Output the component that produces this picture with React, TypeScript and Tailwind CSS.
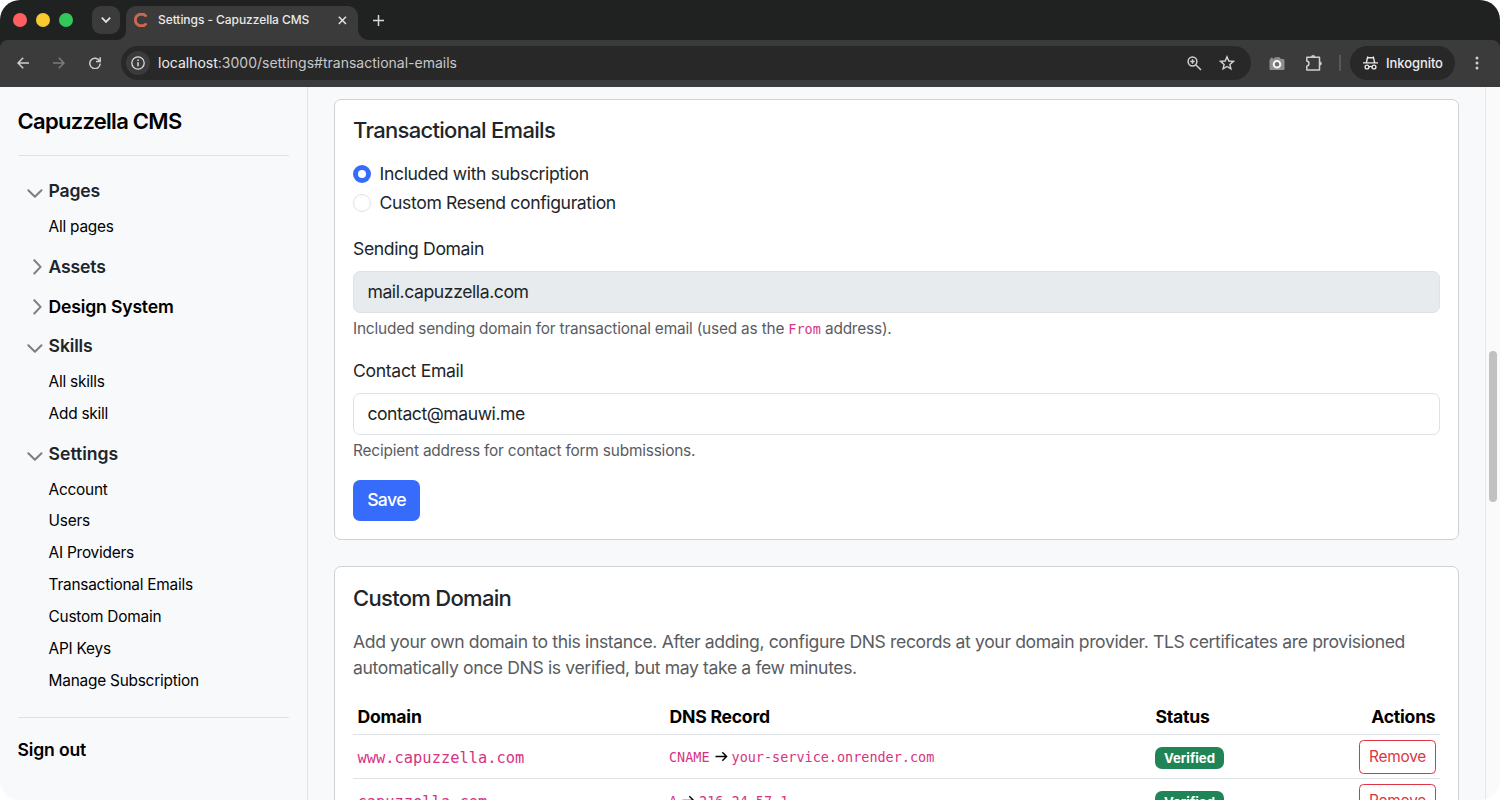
import type { ReactNode } from "react"
import clsx from "clsx"

type NavSection = {
  label: string
  open?: boolean
  strong?: boolean
  className: string
  items?: string[]
}

const sections: NavSection[] = [
  {
    label: "Pages",
    open: true,
    className: "mt-[22px] tracking-[-0.012em]",
    items: ["All pages"],
  },
  { label: "Assets", className: "mt-[11.1px] tracking-[-0.01em]" },
  { label: "Design System", strong: true, className: "mt-[14px] tracking-[-0.011em]" },
  {
    label: "Skills",
    open: true,
    className: "mt-[13px] tracking-[-0.01em]",
    items: ["All skills", "Add skill"],
  },
  {
    label: "Settings",
    open: true,
    className: "mt-[11.1px] tracking-[-0.002em]",
    items: [
      "Account",
      "Users",
      "AI Providers",
      "Transactional Emails",
      "Custom Domain",
      "API Keys",
      "Manage Subscription",
    ],
  },
]

const domains = [
  { name: "www.capuzzella.com", type: "CNAME", target: "your-service.onrender.com" },
  { name: "capuzzella.com", type: "A", target: "216.24.57.1" },
]

function TabStrip() {
  return (
    <div className="flex h-10 items-end bg-[#202221]">
      <div className="mb-[13px] ml-[13px] flex gap-[9px]">
        <span className="size-[14px] rounded-full bg-[#ff5f5f]" />
        <span className="size-[14px] rounded-full bg-[#fac831]" />
        <span className="size-[14px] rounded-full bg-[#32c85a]" />
      </div>
      <button className="mb-[6px] ml-[19px] flex size-7 items-center justify-center rounded-[9px] bg-[#3b3b3b]">
        <svg width="12" height="8" viewBox="0 0 12 8" fill="none" stroke="#e3e3e3" strokeWidth="1.8">
          <path d="M1.8 1.7 6 5.9l4.2-4.2" />
        </svg>
      </button>
      <div className="relative ml-[6px] flex h-[34px] w-[232px] items-center rounded-t-[10px] bg-[#3b3b3b] pb-[6px] pl-[7px]">
        <svg className="absolute bottom-0 -left-[9px]" width="9" height="9" fill="#3b3b3b">
          <path d="M9 0v9H0a9 9 0 0 0 9-9Z" />
        </svg>
        <svg className="absolute -right-[11px] bottom-0" width="11" height="11" fill="#3b3b3b">
          <path d="M0 0v11h11A11 11 0 0 1 0 0Z" />
        </svg>
        <svg width="16" height="16" viewBox="0 0 16 16" fill="none" stroke="#cd6853" strokeWidth="2.8">
          <path d="M12.6 4.7V3.9L10.8 2.3H6.2L3.4 4.4 2.5 6.6v2.8l.9 2.2 2.8 2.1h4.6l1.8-1.6v-.8" />
        </svg>
        <span className="ml-[9px] text-[12px] leading-4 font-medium tracking-[-0.005em] whitespace-nowrap text-[#e8e8e8]">
          Settings - Capuzzella CMS
        </span>
        <svg
          className="absolute top-[10px] left-[212px]"
          width="9"
          height="9"
          stroke="#e3e3e3"
          strokeWidth="1.5"
        >
          <path d="m.8.8 7.200 7.200m0-7.200L.8 8" />
        </svg>
      </div>
      <svg className="mb-[14.5px] ml-[14.5px]" width="11" height="11" stroke="#d8d8d8" strokeWidth="1.5">
        <path d="M5.5 0v11M0 5.5h11" />
      </svg>
    </div>
  )
}

function Toolbar() {
  return (
    <div className="bg-[#202221]">
      <div className="flex h-[47px] items-center rounded-t-[8px] bg-[#3b3b3b] pb-px">
        <svg className="ml-[17px]" width="12" height="12" fill="none" stroke="#cfcfcf" strokeWidth="1.5">
          <path d="M12 6H1M6.2.8 1 6l5.2 5.2" />
        </svg>
        <svg className="ml-6" width="12" height="12" fill="none" stroke="#7c7c7c" strokeWidth="1.5">
          <path d="M0 6h11M5.8.8 11 6l-5.2 5.2" />
        </svg>
        <svg className="ml-6" width="12" height="12" fill="none" stroke="#cfcfcf" strokeWidth="1.5">
          <path d="M10.6 4A5.2 5.2 0 1 0 11.2 6.600M11.2.2v4.200H7" />
        </svg>
        <div className="ml-5 flex h-[34px] w-[1130px] items-center rounded-full bg-[#282828] pl-[5px]">
          <span className="flex size-6 items-center justify-center rounded-full bg-[#3b3b3b]">
            <svg width="14" height="14" fill="none" stroke="#dcdcdc" strokeWidth="1.3">
              <circle cx="7" cy="7" r="6.2" />
              <path d="M7 6.2v4.1M7 3.4v1.5" strokeWidth="1.5" />
            </svg>
          </span>
          <span className="ml-2 text-[14px] leading-5 whitespace-nowrap text-[#c7c7c7]">
            <span className="text-[#ececec]">localhost</span>:3000/settings#transactional-emails
          </span>
          <svg
            className="mr-[17px] ml-auto"
            width="15"
            height="15"
            fill="none"
            stroke="#cfcfcf"
            strokeWidth="1.5"
          >
            <circle cx="5.500" cy="5.500" r="4.400" />
            <path d="m8.700 8.700 5.300 5.300M5.500 3.300v4.400M3.300 5.500h4.400" />
          </svg>
          <svg
            className="mr-[16px]"
            width="16"
            height="16"
            viewBox="0 0 16 16"
            fill="none"
            stroke="#d4d4d4"
            strokeWidth="1.4"
          >
            <path d="m8 1.800 1.800 4.200 4.600.400-3.500 3 1 4.500L8 11.500l-3.900 2.400 1-4.500-3.500-3L6.200 6Z" />
          </svg>
        </div>
        <svg className="ml-[18px]" width="16" height="15" viewBox="0 0 16 15">
          <path
            d="M1.500 3.200V1.800h2.300v1h1L6 1.200h4.500L12 2.900h2.200c.7 0 1.300.6 1.300 1.300v8.500c0 .7-.6 1.300-1.300 1.300H1.800C1.100 14 .5 13.400.500 12.700V4.200c0-.5.400-.9 1-1Z"
            fill="#8e8e8e"
          />
          <circle cx="8" cy="8.200" r="3.300" fill="#6e6e6e" stroke="#f4f4f4" strokeWidth="2" />
        </svg>
        <svg
          className="ml-5"
          width="18"
          height="18"
          viewBox="0 0 18 18"
          fill="none"
          stroke="#cfcfcf"
          strokeWidth="1.500"
        >
          <path d="M1.800 3.200h12.700v12.700H1.800v-3.700a2.700 2.700 0 0 0 0-5.300Z" strokeLinejoin="round" />
          <path
            d="M6.300 3a1.800 1.800 0 0 1 3.600 0ZM14.700 7.700a1.800 1.800 0 0 1 0 3.600Z"
            fill="#cfcfcf"
            strokeWidth=".6"
          />
        </svg>
        <span className="ml-4 h-4 w-[2px] bg-[#585858]" />
        <div className="ml-[9px] flex h-[34px] w-[105px] items-center rounded-full bg-[#282828] pl-[13px]">
          <svg width="15" height="14" viewBox="0 0 15 14" fill="none" stroke="#e6e6e6" strokeWidth="1.400">
            <path d="M0 6.900h15M3.400 6.500 4.600 1.200l1.600.600h2.600l1.600-.600 1.200 5.300" />
            <circle cx="4" cy="11" r="1.900" />
            <circle cx="11" cy="11" r="1.900" />
            <path d="M5.900 10.800q1.600-.9 3.200 0" />
          </svg>
          <span className="ml-2 text-[13px] leading-5 font-medium tracking-[-0.005em] text-[#ececec]">
            Inkognito
          </span>
        </div>
        <svg className="ml-5" width="4" height="14" fill="#cfcfcf">
          <circle cx="2" cy="2" r="1.500" />
          <circle cx="2" cy="7" r="1.500" />
          <circle cx="2" cy="12" r="1.500" />
        </svg>
      </div>
    </div>
  )
}

function Chevron({ open }: { open?: boolean }) {
  return (
    <span className="flex h-[26px] w-[31px] shrink-0 items-center">
      {open ? (
        <svg
          className="mt-[5px] ml-[9px]"
          width="16"
          height="9"
          fill="none"
          stroke="#7d7e80"
          strokeWidth="2"
          strokeLinecap="round"
          strokeLinejoin="round"
        >
          <path d="m1.300 1.200 6.600 6.500 6.600-6.500" />
        </svg>
      ) : (
        <svg
          className="ml-[15px]"
          width="9"
          height="16"
          fill="none"
          stroke="#7d7e80"
          strokeWidth="2"
          strokeLinecap="round"
          strokeLinejoin="round"
        >
          <path d="m1.300 1.300 6.300 6.600-6.300 6.600" />
        </svg>
      )}
    </span>
  )
}

function Sidebar() {
  return (
    <aside className="w-[308px] shrink-0 border-r border-[#dee2e6] pt-[21px] pr-[18px] pl-[17.6px]">
      <h1 className="text-[22px] leading-[26px] font-semibold tracking-[-0.033em] text-black">
        Capuzzella CMS
      </h1>
      <nav className="mt-[21px] border-t border-b border-[#dee2e6] pb-[20px]">
        {sections.map((section) => (
          <div key={section.label} className={section.className}>
            <div
              className={clsx(
                "flex items-center text-[17.6px] leading-[26px] font-semibold",
                section.strong ? "text-black" : "text-[#212529]",
              )}
            >
              <Chevron open={section.open} />
              {section.label}
            </div>
            {section.items && (
              <div className="pt-[6.9px]">
                {section.items.map((item) => (
                  <a
                    key={item}
                    href="#"
                    className="block h-[31.9px] pl-[31px] text-[15.4px] leading-[32px] tracking-[-0.015em] text-black"
                  >
                    {item}
                  </a>
                ))}
              </div>
            )}
          </div>
        ))}
      </nav>
      <a
        href="#"
        className="mt-[19px] block text-[17.6px] leading-[26px] font-semibold tracking-[-0.01em] text-black"
      >
        Sign out
      </a>
    </aside>
  )
}

function Card({ children, className }: { children: ReactNode; className?: string }) {
  return (
    <section className={clsx("rounded-[7px] border border-[#cfd1d3] bg-white px-[18px]", className)}>
      {children}
    </section>
  )
}

function EmailCard() {
  return (
    <Card className="h-[441px] pt-[17px]">
      <h2 className="text-[22px] leading-[26px] font-medium tracking-[-0.0315em]">
        Transactional Emails
      </h2>
      <label className="mt-[18px] flex h-[26px] items-center text-[17.6px] tracking-[-0.0215em]">
        <span className="mr-[8.6px] flex size-[18px] items-center justify-center rounded-full bg-[#376bfb]">
          <span className="size-2 rounded-full bg-white" />
        </span>
        Included with subscription
      </label>
      <label className="mt-[3px] flex h-[26px] items-center text-[17.6px] tracking-[-0.0215em]">
        <span className="mr-[8.6px] size-[18px] rounded-full border border-[#dee2e6]" />
        Custom Resend configuration
      </label>

      <div className="mt-5 text-[17.6px] leading-[26px] tracking-[-0.0215em]">Sending Domain</div>
      <div className="mt-[9px] h-[42px] rounded-[7px] border border-[#dee2e6] bg-[#e8ebee] px-[13.4px] text-[17.6px] leading-10 tracking-[-0.0235em]">
        mail.capuzzella.com
      </div>
      <p className="mt-1 text-[15.4px] leading-6 tracking-[-0.012em] text-[#595c5f]">
        Included sending domain for transactional email (used as the{" "}
        <code className="font-['DejaVu_Sans_Mono',monospace] text-[13.475px] tracking-normal text-[#d63384]">
          From
        </code>{" "}
        address).
      </p>

      <div className="mt-[17px] text-[17.6px] leading-[26px] tracking-[-0.0185em]">Contact Email</div>
      <div className="mt-[9px] h-[42px] rounded-[7px] border border-[#dee2e6] px-[13.4px] text-[17.6px] leading-10 tracking-[-0.0255em]">
        contact@mauwi.me
      </div>
      <p className="mt-1 text-[15.4px] leading-6 tracking-[-0.012em] text-[#595c5f]">
        Recipient address for contact form submissions.
      </p>
      <button className="mt-[17px] h-[41px] w-[67px] rounded-[7px] bg-[#376bfb] text-[17.6px] font-medium tracking-[-0.035em] text-white">
        Save
      </button>
    </Card>
  )
}

function DomainCard() {
  return (
    <Card className="mt-[26px] pt-[18px]">
      <h2 className="text-[22px] leading-[26px] font-medium tracking-[-0.0315em]">Custom Domain</h2>
      <p className="mt-[18px] text-[17.6px] leading-[26px] tracking-[-0.0215em] whitespace-nowrap text-[#595c5f]">
        Add your own domain to this instance. After adding, configure DNS records at your domain
        provider. TLS certificates are provisioned
        <br />
        automatically once DNS is verified, but may take a few minutes.
      </p>
      <table className="mt-[18px] w-full table-fixed border-collapse text-black">
        <colgroup>
          <col className="w-[312px]" />
          <col className="w-[486px]" />
          <col className="w-[150px]" />
          <col />
        </colgroup>
        <thead>
          <tr className="h-[35px] border-b border-[#dee2e6] text-left text-[17.6px] leading-[26px] tracking-[-0.013em]">
            <th className="px-[4.5px] pt-px font-bold">Domain</th>
            <th className="px-[4.5px] pt-px font-bold">DNS Record</th>
            <th className="px-[4.5px] pt-px font-bold">Status</th>
            <th className="px-[4.5px] pt-px text-right font-bold">Actions</th>
          </tr>
        </thead>
        <tbody>
          {domains.map((domain) => (
            <tr key={domain.name} className="h-11 border-b border-[#dee2e6]">
              <td className="px-[4.5px] pt-1">
                <code className="font-['DejaVu_Sans_Mono',monospace] text-[15.4px] text-[#d63384]">
                  {domain.name}
                </code>
              </td>
              <td className="px-[4px] pt-[2px]">
                <div className="flex items-center font-['DejaVu_Sans_Mono',monospace] text-[13.475px] text-[#d63384]">
                  {domain.type}
                  <svg
                    className="mr-[4px] ml-[5px]"
                    width="13"
                    height="11"
                    fill="none"
                    stroke="#000"
                    strokeWidth="1.400"
                  >
                    <path d="M.500 5.500h11M7.300 1.200l4.300 4.300-4.300 4.300" />
                  </svg>
                  {domain.target}
                </div>
              </td>
              <td className="px-[4px] pt-1">
                <span className="flex h-[22px] w-[69px] items-center justify-center rounded-[7px] bg-[#1f8557] pt-px text-[13.2px] font-bold text-white">
                  Verified
                </span>
              </td>
              <td className="px-[4px] pt-[2px]">
                <button className="ml-auto block h-[34px] w-[77px] rounded-[4.5px] border border-[#dc3545] text-[15.4px] tracking-[-0.015em] text-[#dc3545]">
                  Remove
                </button>
              </td>
            </tr>
          ))}
        </tbody>
      </table>
    </Card>
  )
}

export default function App() {
  return (
    <div className="flex h-[800px] w-[1500px] flex-col overflow-hidden rounded-[20px] bg-[#f8f9fb] font-['Inter',sans-serif] text-[#212529]">
      <TabStrip />
      <Toolbar />
      <div className="flex min-h-0 flex-1">
        <Sidebar />
        <main className="min-w-0 flex-1 overflow-hidden px-[26px] pt-3">
          <EmailCard />
          <DomainCard />
        </main>
        <div className="w-[15px] shrink-0 border-l border-[#e6e6e6] bg-[#fafafa] pt-[264px] pl-[3px]">
          <div className="h-[151px] w-2 rounded-full bg-[#c1c1c1]" />
        </div>
      </div>
    </div>
  )
}
